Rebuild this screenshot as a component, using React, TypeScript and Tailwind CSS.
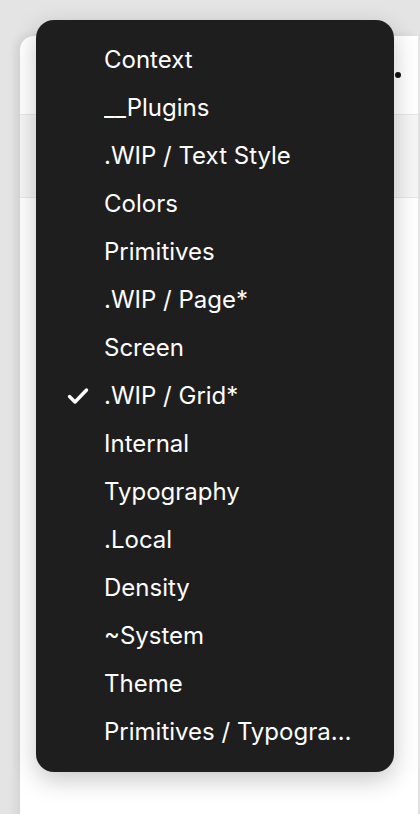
import React from "react";

const items = [
  "Context",
  "__Plugins",
  ".WIP / Text Style",
  "Colors",
  "Primitives",
  ".WIP / Page*",
  "Screen",
  ".WIP / Grid*",
  "Internal",
  "Typography",
  ".Local",
  "Density",
  "~System",
  "Theme",
  "Primitives / Typography",
];

const selected = ".WIP / Grid*";

const CheckIcon = () => (
  <svg width="22" height="18" viewBox="0 0 22 18" fill="none">
    <path
      d="M2.5 9.5 L8 15 L19.5 3"
      stroke="white"
      strokeWidth="3.4"
      strokeLinecap="round"
      strokeLinejoin="round"
    />
  </svg>
);

const App = () => {
  return (
    <div className="relative h-[814px] w-[420px] overflow-hidden bg-[#e4e4e4] font-['Inter',sans-serif]">
      {/* card behind the menu */}
      <div className="absolute left-[20px] top-[36px] h-[800px] w-[398px] rounded-tl-[14px] bg-white shadow-[-4px_0_10px_rgba(0,0,0,0.08)]">
        <div className="flex h-[78px] items-center justify-end pr-[17px]">
          <span className="size-[6px] rounded-full bg-[#111]" />
        </div>
        <div className="h-[83px] border-t border-[#e6e6e6] bg-[#f5f5f5]" />
        <div className="border-t border-[#e6e6e6]" />
      </div>

      {/* dropdown menu */}
      <div className="absolute left-[36px] top-[20px] w-[358px] rounded-[18px] bg-[#1e1e1e] py-4 shadow-[0_8px_24px_rgba(0,0,0,0.22)]">
        {items.map((item) => (
          <div key={item} className="flex h-12 items-center">
            <div className="flex w-[68px] shrink-0 items-center justify-end pr-[15px]">
              {item === selected && <CheckIcon />}
            </div>
            <span className="min-w-0 truncate pr-[40px] text-[24px] leading-normal text-white">
              {item}
            </span>
          </div>
        ))}
      </div>
    </div>
  );
};

export default App;
